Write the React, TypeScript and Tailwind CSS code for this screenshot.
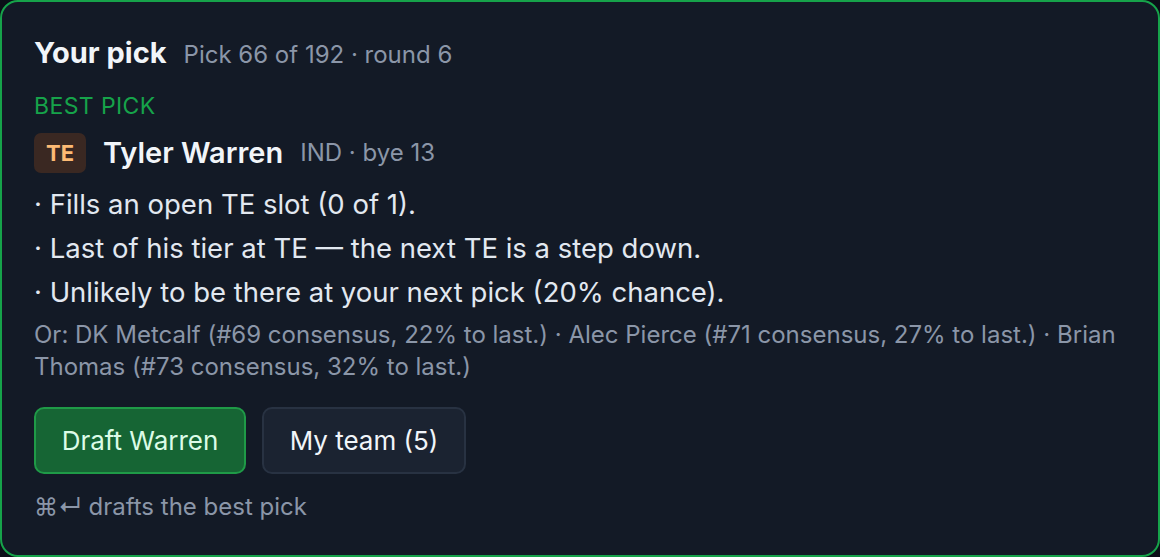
import React from "react";

export default function App() {
  return (
    <div className="w-[1160px] h-[557px] bg-[#0b0f17]" style={{ fontFamily: "Inter, 'Noto Sans', sans-serif" }}>
      <div className="w-full h-full rounded-[18px] border-2 border-[#16a34a] bg-[#131a26] px-[32px] pt-[33px]">
        <div className="flex items-baseline gap-[17px] h-[36px] leading-[36px]">
          <span className="text-[29px] font-bold text-[#f1f5f9]">Your pick</span>
          <span className="text-[24px] text-[#8b96a8]">Pick 66 of 192 · round 6</span>
        </div>
        <div className="mt-[19px] text-[23px] text-[#16a34a] leading-[32px] tracking-[0.4px]">BEST PICK</div>
        <div className="mt-[11px] flex items-center h-[40px]">
          <span className="w-[52px] h-[40px] rounded-[7px] bg-[#3a2822] text-[#fdba74] text-[22px] font-bold flex items-center justify-center">TE</span>
          <span className="ml-[17px] text-[29px] font-semibold text-[#f1f5f9]">Tyler Warren</span>
          <span className="ml-[17px] text-[24px] text-[#8b96a8]">IND · bye 13</span>
        </div>
        <div className="mt-[9px] text-[27.5px] text-[#e2e8f0] leading-[44px]">
          <div>· Fills an open TE slot (0 of 1).</div>
          <div>· Last of his tier at TE — the next TE is a step down.</div>
          <div>· Unlikely to be there at your next pick (20% chance).</div>
        </div>
        <div className="mt-[5px] text-[24px] text-[#8b96a8] leading-[32px]">
          Or: DK Metcalf (#69 consensus, 22% to last.) · Alec Pierce (#71 consensus, 27% to last.) · Brian Thomas (#73 consensus, 32% to last.)
        </div>
        <div className="mt-[24px] flex gap-[16px]">
          <button className="w-[212px] h-[67px] rounded-[10px] bg-[#166534] border-2 border-[#1f9a47] text-[26px] text-[#dcfce7]">Draft Warren</button>
          <button className="w-[204px] h-[67px] rounded-[10px] bg-[#1b2331] border-2 border-[#283242] text-[26px] text-[#f1f5f9]">My team (5)</button>
        </div>
        <div className="mt-[17px] text-[24px] text-[#8b96a8] leading-[32px]">⌘↵ drafts the best pick</div>
      </div>
    </div>
  );
}
